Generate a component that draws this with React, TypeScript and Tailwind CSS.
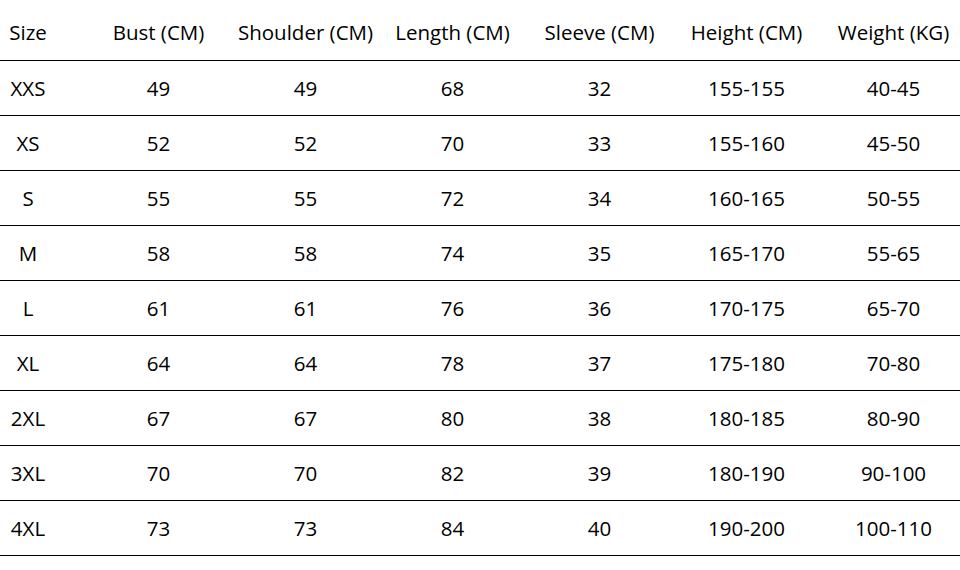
const headers = [
  "Size",
  "Bust (CM)",
  "Shoulder (CM)",
  "Length (CM)",
  "Sleeve (CM)",
  "Height (CM)",
  "Weight (KG)"
];

const rows = [
  ["XXS", "49", "49", "68", "32", "155-155", "40-45"],
  ["XS", "52", "52", "70", "33", "155-160", "45-50"],
  ["S", "55", "55", "72", "34", "160-165", "50-55"],
  ["M", "58", "58", "74", "35", "165-170", "55-65"],
  ["L", "61", "61", "76", "36", "170-175", "65-70"],
  ["XL", "64", "64", "78", "37", "175-180", "70-80"],
  ["2XL", "67", "67", "80", "38", "180-185", "80-90"],
  ["3XL", "70", "70", "82", "39", "180-190", "90-100"],
  ["4XL", "73", "73", "84", "40", "190-200", "100-110"]
];

export default function App() {
  return (
    <div className="h-[570px] w-[960px] overflow-hidden bg-white font-['Open_Sans',sans-serif] text-[20.5px] leading-none text-black">
      <SizeRow cells={headers} header />
      {rows.map((row) => (
        <SizeRow key={row[0]} cells={row} />
      ))}
    </div>
  );
}

function SizeRow({ cells, header = false }: { cells: string[]; header?: boolean }) {
  return (
    <div
      className={`grid grid-cols-[85px_repeat(6,147px)] items-center border-b border-black ${
        header ? "h-[61px] pt-[5px]" : "h-[55px]"
      }`}
    >
      {cells.map((cell, i) => (
        <div key={i} className={i === 0 ? "w-[56px] text-center whitespace-nowrap" : "text-center whitespace-nowrap"}>
          {cell}
        </div>
      ))}
    </div>
  );
}
